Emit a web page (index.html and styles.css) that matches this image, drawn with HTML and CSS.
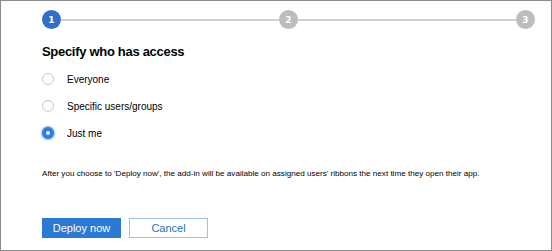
FILE: index.html
```html
<!DOCTYPE html>
<html lang="en">

<head>
    <meta charset="utf-8">
    <title>Deploy add-in</title>
    <link rel="stylesheet" href="styles.css">
</head>

<body>
    <div class="frame">
        <div class="stepper">
            <span class="step active">1</span>
            <span class="line"></span>
            <span class="step">2</span>
            <span class="line"></span>
            <span class="step">3</span>
        </div>

        <h2 class="title">Specify who has access</h2>

        <div class="options">
            <label class="option"><span class="radio"></span>Everyone</label>
            <label class="option"><span class="radio"></span>Specific users/groups</label>
            <label class="option"><span class="radio checked"></span>Just me</label>
        </div>

        <p class="note">After you choose to 'Deploy now', the add-in will be available on assigned users' ribbons the next time they open their app.</p>

        <div class="buttons">
            <button class="primary">Deploy now</button>
            <button class="secondary">Cancel</button>
        </div>
    </div>
</body>

</html>
```

FILE: styles.css
```css
body {
    margin: 0;
    font-family: "Liberation Sans", sans-serif;
    color: #000;
}

.frame {
    width: 552px;
    height: 251px;
    box-sizing: border-box;
    border: 1px solid #8c8c8c;
    background-color: #fff;
    padding: 9px 16px 0 41px;
}

/* steps on top */
.stepper {
    display: flex;
    align-items: center;
}

.step {
    width: 19px;
    height: 19px;
    border-radius: 50%;
    background-color: #bdbdbd;
    color: #fff;
    font-family: "DejaVu Sans", sans-serif;
    font-size: 9px;
    font-weight: bold;
    display: flex;
    align-items: center;
    justify-content: center;
    flex-shrink: 0;
}

.step.active {
    background-color: #2f6fc9;
}

.line {
    flex: 1;
    height: 2px;
    background-color: #d0d0d0;
}

.title {
    font-size: 13px;
    letter-spacing: -0.3px;
    font-weight: bold;
    margin: 15px 0 14px 0;
}

.options {
    display: flex;
    flex-direction: column;
    gap: 15px;
}

.option {
    display: flex;
    align-items: center;
    font-size: 10px;
    height: 12px;
}

.radio {
    width: 10px;
    height: 10px;
    border: 1px solid #c8c8c8;
    border-radius: 50%;
    margin: 0 13px 0 0;
    box-sizing: content-box;
}

.radio.checked {
    width: 4px;
    height: 4px;
    border: 4px solid #2b7de9;
    background-color: #fff;
    box-shadow: 0 0 2px 1px #8cbcf5;
}

.note {
    font-size: 8.1px;
    margin: 30px 0 0 0;
}

.buttons {
    display: flex;
    gap: 8px;
    margin-top: 40px;
}

button {
    width: 79px;
    height: 20px;
    font-family: "Liberation Sans", sans-serif;
    font-size: 11px;
    padding: 0;
}

.primary {
    background-color: #2b79d6;
    border: 1px solid #2b79d6;
    color: #fff;
}

.secondary {
    background-color: #fff;
    border: 1px solid #9fc0ea;
    color: #2b6cc4;
}
```
